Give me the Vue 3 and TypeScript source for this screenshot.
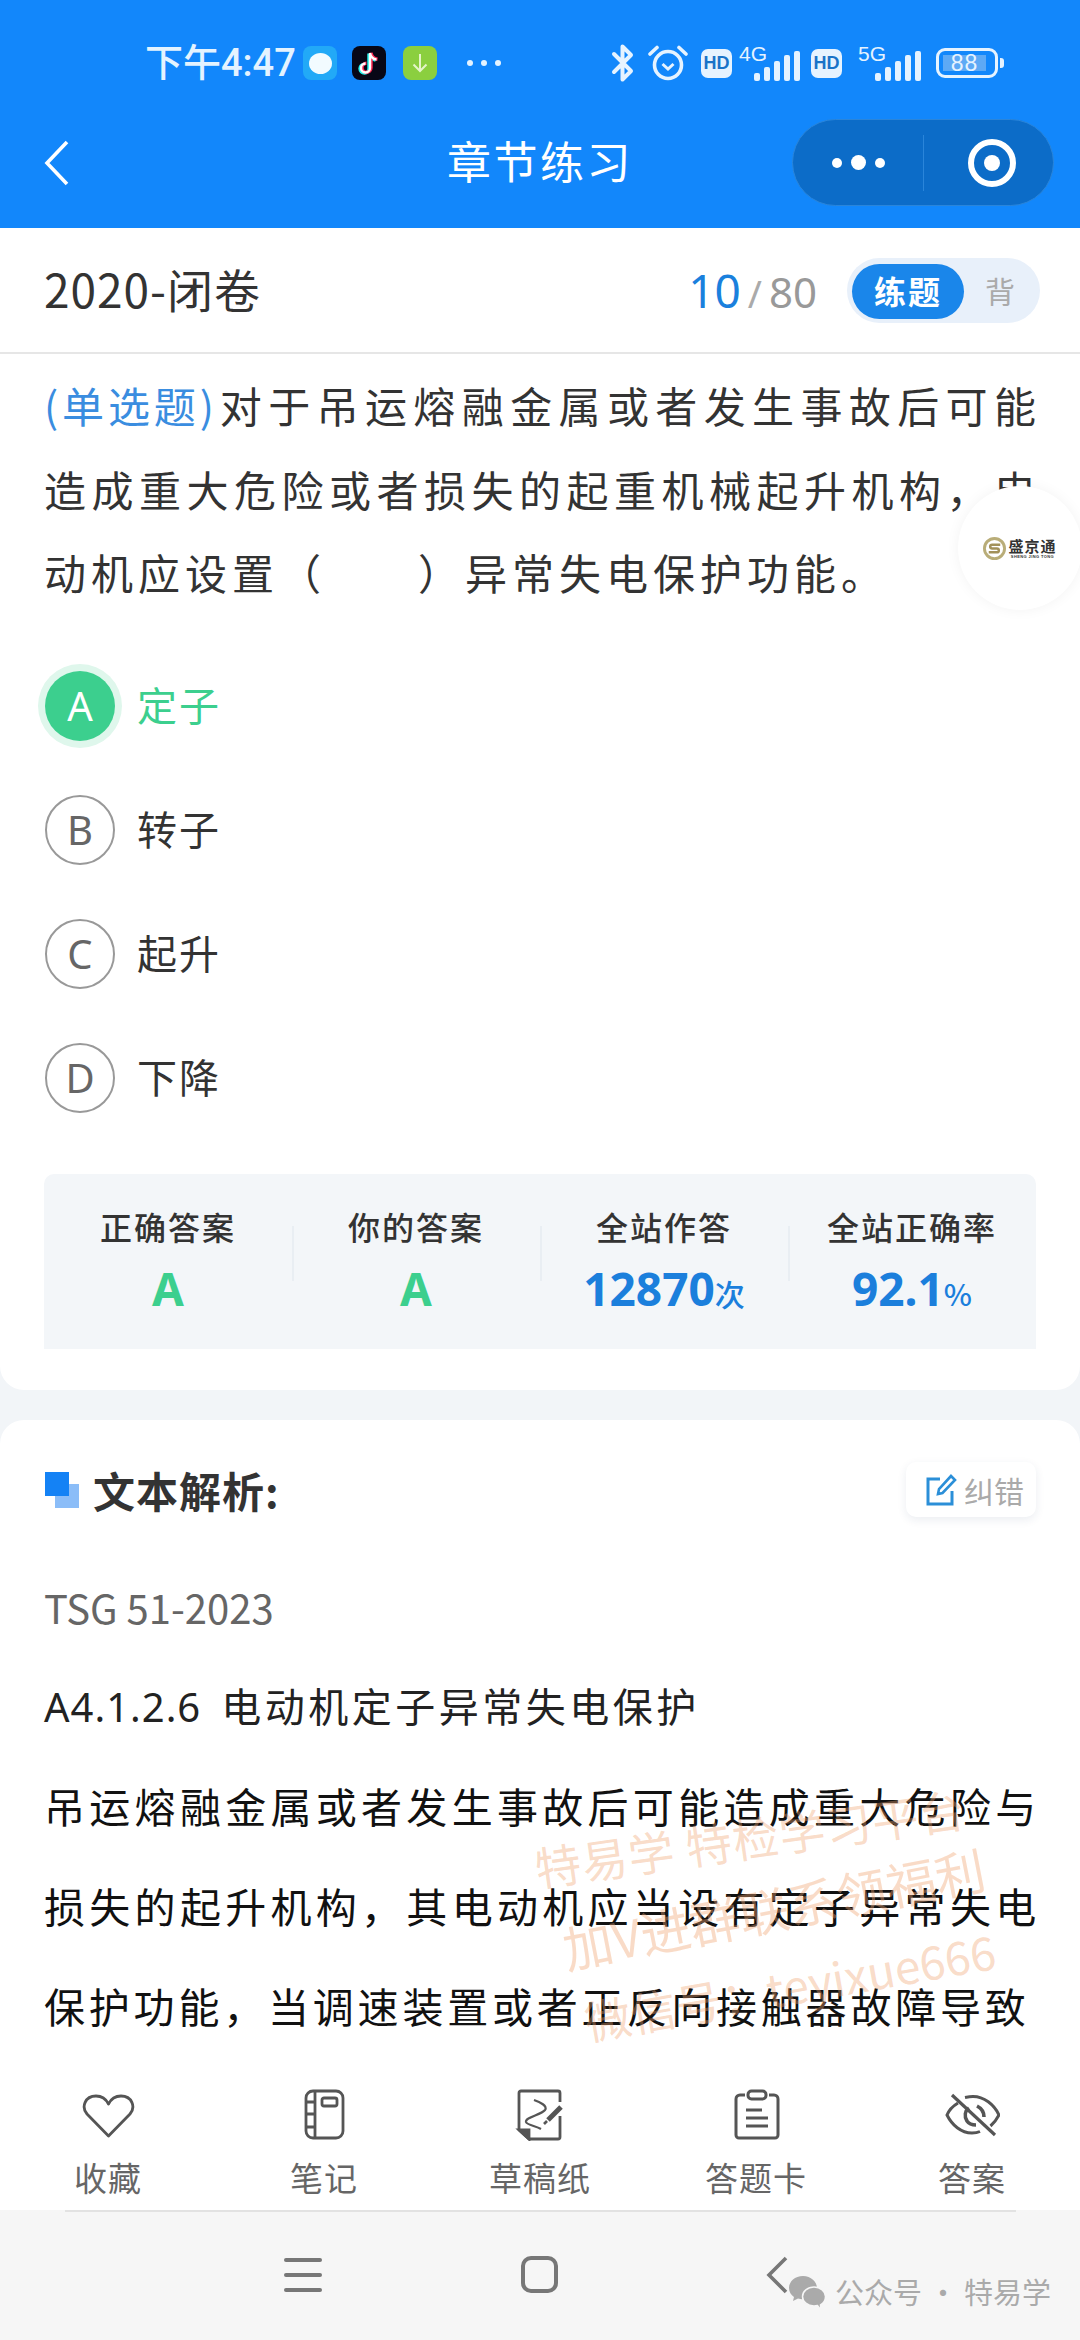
<script setup lang="ts">
interface Option { key: string; text: string; active?: boolean }
interface Stat { label: string; value: string; unit?: string; tone: 'green' | 'blue' }
interface Tab { label: string; icon: string }

const options: Option[] = [
  { key: 'A', text: '定子', active: true },
  { key: 'B', text: '转子' },
  { key: 'C', text: '起升' },
  { key: 'D', text: '下降' }
]

const stats: Stat[] = [
  { label: '正确答案', value: 'A', tone: 'green' },
  { label: '你的答案', value: 'A', tone: 'green' },
  { label: '全站作答', value: '12870', unit: '次', tone: 'blue' },
  { label: '全站正确率', value: '92.1', unit: '%', tone: 'blue' }
]

const tabs: Tab[] = [
  { label: '收藏', icon: 'heart' },
  { label: '笔记', icon: 'note' },
  { label: '草稿纸', icon: 'draft' },
  { label: '答题卡', icon: 'card' },
  { label: '答案', icon: 'eye' }
]

const signalBars = [8, 14, 20, 26, 30]
</script>

<template>
  <div class="page">
    <header class="top">
      <div class="status">
        <span class="time">下午4:47</span>
        <span class="app app-msg"><i></i></span>
        <span class="app app-tt">
          <svg viewBox="0 0 34 34" width="34" height="34">
            <path d="M18 7v15a4.5 4.5 0 1 1-4.5-4.5M18 7c.6 4 3 6 6.5 6.5" fill="none" stroke="#25f4ee" stroke-width="3.4" transform="translate(-1 .6)" />
            <path d="M18 7v15a4.5 4.5 0 1 1-4.5-4.5M18 7c.6 4 3 6 6.5 6.5" fill="none" stroke="#fe2c55" stroke-width="3.4" transform="translate(1 -.2)" />
            <path d="M18 7v15a4.5 4.5 0 1 1-4.5-4.5M18 7c.6 4 3 6 6.5 6.5" fill="none" stroke="#fff" stroke-width="2.4" />
          </svg>
        </span>
        <span class="app app-dl">
          <svg viewBox="0 0 34 34" width="34" height="34">
            <path d="M17 8v17M10.5 18.5 17 25l6.5-6.5" fill="none" stroke="#e4f5c8" stroke-width="2" />
          </svg>
        </span>
        <span class="more"><i></i><i></i><i></i></span>

        <span class="status-right">
          <svg class="bt" viewBox="0 0 26 40" width="26" height="40">
            <path d="M4 11 21 28l-8.500 8.500V3.500L21 12 4 29" fill="none" stroke="#e6f3ff" stroke-width="4" stroke-linejoin="round" stroke-linecap="round" />
          </svg>
          <svg class="alarm" viewBox="0 0 40 36" width="40" height="36">
            <circle cx="20" cy="20" r="13.500" fill="none" stroke="#e6f3ff" stroke-width="3.600" />
            <path d="M14.500 19 20 24l5.500-5" fill="none" stroke="#e6f3ff" stroke-width="3" />
            <path d="M2 9 9 2.500M38 9l-7-6.500" fill="none" stroke="#e6f3ff" stroke-width="3.600" stroke-linecap="round" />
          </svg>
          <span class="hd">HD</span>
          <span class="net">
            <em>4G</em>
            <span class="bars"><i v-for="h in signalBars" :key="h" :style="{ height: h + 'px' }"></i></span>
          </span>
          <span class="hd hd2">HD</span>
          <span class="net net5">
            <em>5G</em>
            <span class="bars"><i v-for="h in signalBars" :key="h" :style="{ height: h + 'px' }"></i></span>
          </span>
          <span class="battery"><span class="level">88</span></span>
          <span class="nub"></span>
        </span>
      </div>

      <div class="nav">
        <svg class="back" viewBox="0 0 26 46" width="26" height="46">
          <path d="M23 2 3 23l20 21" fill="none" stroke="#fff" stroke-width="3.600" />
        </svg>
        <h1>章节练习</h1>
        <div class="capsule">
          <span class="cap-dots"><i></i><i class="big"></i><i></i></span>
          <span class="cap-line"></span>
          <span class="cap-target"><i></i></span>
        </div>
      </div>
    </header>

    <div class="sub">
      <span class="paper">2020-闭卷</span>
      <span class="count"><b>10</b><s>/</s><em>80</em></span>
      <div class="toggle">
        <span class="on">练题</span>
        <span class="off">背</span>
      </div>
    </div>

    <section class="card first">
      <p class="question">
        <span class="kind">(单选题)</span>对于吊运熔融金属或者发生事故后可能造成重大危险或者损失的起重机械起升机构，电动机应设置（<span class="blank"></span>）异常失电保护功能。
      </p>

      <ul class="options">
        <li v-for="o in options" :key="o.key" :class="{ active: o.active }">
          <span class="mark">{{ o.key }}</span>
          <span class="opt-text">{{ o.text }}</span>
        </li>
      </ul>

      <div class="stats">
        <div v-for="s in stats" :key="s.label" class="stat">
          <span class="label">{{ s.label }}</span>
          <span class="value" :class="s.tone">{{ s.value }}<small v-if="s.unit">{{ s.unit }}</small></span>
        </div>
      </div>

      <div class="float-logo">
        <svg viewBox="0 0 24 24" width="23" height="23">
          <circle cx="12" cy="12" r="10.500" fill="none" stroke="#b9ad78" stroke-width="3" />
          <path d="M18 8H9.500a2 2 0 0 0 0 4h5a2 2 0 0 1 0 4H6" fill="none" stroke="#a2915a" stroke-width="2.600" />
        </svg>
        <span class="logo-text">
          <b>盛京通</b>
          <small>SHENG JING TONG</small>
        </span>
      </div>
    </section>

    <section class="card second">
      <div class="head">
        <span class="squares"><i></i><i></i></span>
        <h2>文本解析:</h2>
        <span class="report">
          <svg viewBox="0 0 32 32" width="32" height="32">
            <path d="M15 5H3v25h24V17" fill="none" stroke="#2b8fd8" stroke-width="3" />
            <path d="m13 20 1-5L26 2l4 4-12.500 13z" fill="none" stroke="#2b8fd8" stroke-width="2.600" />
          </svg>
          <span>纠错</span>
        </span>
      </div>
      <p class="src">TSG 51-2023</p>
      <p class="clause"><span class="code">A4.1.2.6</span>电动机定子异常失电保护</p>
      <p class="body-text">吊运熔融金属或者发生事故后可能造成重大危险与损失的起升机构，其电动机应当设有定子异常失电保护功能，当调速装置或者正反向接触器故障导致</p>

      <div class="stamp">
        <span class="s1">特易学 特检学习平台</span>
        <span class="s2">加V进群联系领福利</span>
        <span class="s3">微信号：teyixue666</span>
      </div>
    </section>

    <footer class="tabs">
      <div v-for="t in tabs" :key="t.label" class="tab">
        <svg viewBox="0 0 56 52" width="56" height="52" fill="none" stroke="#555" stroke-width="2.800">
          <template v-if="t.icon === 'heart'">
            <path d="M28.500 47 7 25C1 18 5 7 16 7c5 0 10 3 12.500 8C31 10 36 7 41 7c11 0 15 11 9 18z" stroke-linejoin="round" />
          </template>
          <template v-else-if="t.icon === 'note'">
            <rect x="10" y="2" width="37" height="47" rx="7" />
            <path d="M19 2v47M10 13h9M10 25h9M10 38h9" />
            <rect x="26" y="9" width="15" height="8" rx="2" />
          </template>
          <template v-else-if="t.icon === 'draft'">
            <path d="M48 13V4a2 2 0 0 0-2-2H9a2 2 0 0 0-2 2v37l10 9h29a2 2 0 0 0 2-2V27" />
            <path d="M7 41h10v9z" fill="#555" />
            <path d="M22 11c6 2 14 6 11 10-4 5-20 7-19 12 1 3 10 4 15 7" stroke-width="2.200" />
            <path d="m36 31 13-13" stroke-width="5" />
            <path d="m32 35 3-3" stroke-width="2.600" />
          </template>
          <template v-else-if="t.icon === 'card'">
            <path d="M17 6h-5a4 4 0 0 0-4 4v36a3 3 0 0 0 3 3h36a3 3 0 0 0 3-3V10a4 4 0 0 0-4-4h-5" stroke-width="3" />
            <rect x="20" y="2" width="18" height="8" rx="3.500" stroke-width="3" />
            <path d="M18 21h16M18 29h22M18 37h22" stroke-width="3.200" />
          </template>
          <template v-else>
            <path d="M14 14C9 17 5 21 3 26c5 10 14 18 25 18 3 0 6-.6 8-1.500M21 8.500C23.500 8 26 7.500 29 7.500c11 0 21 8 26 18.500-2 4-5 8-8.500 11" stroke-width="3" />
            <path d="M25 19c-4 3-5 8-2 13 2 3 5 4 9 4M33 17c4 2 7 6 7 11" stroke-width="3.600" />
            <path d="M8 6l43 40" stroke-width="3.200" />
          </template>
        </svg>
        <span>{{ t.label }}</span>
      </div>
    </footer>

    <nav class="sysbar">
      <span class="burger"><i></i><i></i><i></i></span>
      <span class="home"></span>
      <svg class="sys-back" viewBox="0 0 22 38" width="22" height="38">
        <path d="M20 2 3 19l17 17" fill="none" stroke="#777" stroke-width="3.600" />
      </svg>
      <div class="mp">
        <svg viewBox="0 0 40 36" width="40" height="36">
          <path d="M16 1C8 1 2 6.500 2 13c0 4 2 7 5 9l-1 4 5-2.500c1.500.5 3 .7 5 .7 8 0 14-5.200 14-11.200S24 1 16 1z" fill="#aaa" />
          <path d="M27 12c-6.500 0-11.500 4.300-11.500 9.500S20.500 31 27 31c1.200 0 2.500-.2 3.500-.5L34 35l-.5-5c3-1.800 5-5 5-8.500C38.500 16.300 33.500 12 27 12z" fill="#aaa" stroke="#f6f6f6" stroke-width="1.500" />
        </svg>
        <span>公众号 · 特易学</span>
      </div>
    </nav>
  </div>
</template>

<style scoped>
.page {
  position: relative;
  width: 1080px;
  height: 2340px;
  overflow: hidden;
  display: flex;
  flex-direction: column;
  background: #f2f5f8;
  font-family: "Noto Sans CJK SC", "Noto Sans", sans-serif;
  color: #333;
}

.page i, .page em, .page s { font-style: normal; text-decoration: none; }

/* header */
.top {
  height: 228px;
  flex: none;
  background: #1287fb;
  color: #fff;
}

.status {
  height: 126px;
  padding: 0 0 0 145px;
  display: flex;
  align-items: center;
  box-sizing: border-box;
}

.time {
  width: 158px;
  font: 500 38px/1 Roboto, "Noto Sans CJK SC", sans-serif;
  color: #e4f3ff;
  white-space: nowrap;
}

.app {
  width: 34px;
  height: 34px;
  flex: none;
  border-radius: 8px;
  display: flex;
  align-items: center;
  justify-content: center;
}

.app-msg { background: #22a9f7; }
.app-msg i { width: 23px; height: 21px; border-radius: 50%; background: #f2fbff; }
.app-tt { background: #070716; margin-left: 15px; }
.app-dl { background: #8bcf3f; margin-left: 17px; }

.more { display: flex; gap: 8px; margin-left: 30px; }
.more i { width: 6px; height: 6px; border-radius: 50%; background: #e4f3ff; }

.status-right {
  display: flex;
  align-items: center;
  position: relative;
  margin-left: 109px;
}

.bt { flex: none; }
.alarm { margin-left: 12px; flex: none; }

.hd {
  width: 31px;
  height: 29px;
  margin-left: 13px;
  border-radius: 7px;
  background: #e6f3ff;
  color: #1a73c8;
  font: 700 18px/29px "Liberation Sans", sans-serif;
  text-align: center;
  flex: none;
}

.hd2 { margin-left: 11px; }

.net {
  width: 62px;
  height: 36px;
  margin-left: 6px;
  display: flex;
  justify-content: flex-end;
  align-items: flex-end;
  position: relative;
  flex: none;
}

.net em {
  position: absolute;
  left: 1px;
  top: -2px;
  font: 400 21px/1 "Liberation Sans", sans-serif;
  color: #e6f3ff;
}

.net5 { width: 63px; margin-left: 16px; }
.net5 em { left: 0; }

.bars { display: flex; align-items: flex-end; gap: 4px; }
.bars i { width: 6px; background: #e6f3ff; border-radius: 2px; }

.battery {
  width: 62px;
  height: 30px;
  margin-left: 15px;
  padding: 4px;
  border: 3px solid #e6f3ff;
  border-radius: 9px;
  box-sizing: border-box;
  flex: none;
  display: flex;
}

.level {
  width: 43px;
  background: #5da9f5;
  color: #e6f3ff;
  font: 400 23px/16px "Liberation Sans", sans-serif;
  text-align: center;
  letter-spacing: 1px;
}

.nub { width: 4px; height: 10px; margin-left: 2px; background: #e6f3ff; border-radius: 0 3px 3px 0; flex: none; }

.nav {
  height: 102px;
  position: relative;
  display: flex;
  align-items: flex-start;
  justify-content: center;
}

.back { position: absolute; left: 44px; top: 14px; }

.nav h1 {
  margin: 3px 0 0;
  font-size: 44px;
  font-weight: 400;
  line-height: 62px;
  letter-spacing: 2.500px;
}

.capsule {
  position: absolute;
  left: 792px;
  top: -7px;
  width: 262px;
  height: 87px;
  box-sizing: border-box;
  border-radius: 44px;
  background: #0c6cc8;
  border: 1px solid #2a85da;
  display: flex;
  align-items: center;
}

.cap-dots { width: 130px; display: flex; justify-content: center; align-items: center; gap: 9px; }
.cap-dots i { width: 10px; height: 10px; border-radius: 50%; background: #fff; }
.cap-dots i.big { width: 15px; height: 15px; }
.cap-line { width: 1px; height: 56px; background: #2a85da; }
.cap-target {
  width: 48px;
  height: 48px;
  margin-left: 44px;
  box-sizing: border-box;
  border: 6px solid #fff;
  border-radius: 50%;
  display: flex;
  align-items: center;
  justify-content: center;
}
.cap-target i { width: 16px; height: 16px; border-radius: 50%; background: #fff; }

/* sub header */
.sub {
  height: 126px;
  flex: none;
  box-sizing: border-box;
  padding: 0 40px 0 44px;
  display: flex;
  align-items: center;
  background: #fff;
  border-bottom: 2px solid #e6e6e6;
}

.paper { font-size: 46px; color: #333; letter-spacing: 1px; margin-top: -5px; }

.count {
  margin-left: auto;
  display: flex;
  align-items: baseline;
  font-family: "Noto Sans", sans-serif;
}
.count b { font-size: 46px; font-weight: 400; color: #1a80dd; }
.count s { font-size: 38px; color: #aaa; margin: 0 7px; }
.count em { font-size: 42px; color: #999; }

.toggle {
  width: 193px;
  height: 65px;
  margin-left: 30px;
  border-radius: 33px;
  background: #e8f0fa;
  box-sizing: border-box;
  padding: 6px 0 0 5px;
  display: flex;
}
.toggle .on {
  width: 112px;
  height: 55px;
  border-radius: 28px;
  background: #1a86ea;
  color: #fff;
  font-size: 32px;
  font-weight: 700;
  line-height: 53px;
  letter-spacing: 2px;
  text-align: center;
}
.toggle .off { margin-left: 21px; font-size: 30px; line-height: 52px; color: #aaa; }

/* cards */
.card {
  position: relative;
  background: #fff;
  flex: none;
}

.first {
  height: 1036px;
  box-sizing: border-box;
  padding: 9px 44px 0;
  border-radius: 0 0 24px 24px;
}

.question {
  margin: 0 -5px 0 0;
  font-size: 42px;
  line-height: 83.500px;
  letter-spacing: 5px;
  color: #333;
  text-align: justify;
}

.kind { color: #3a8de0; letter-spacing: 2.500px; margin-right: 2px; }
.blank { display: inline-block; width: 92px; }

.options {
  list-style: none;
  margin: 30px 0 0;
  padding: 0;
}

.options li {
  height: 124px;
  display: flex;
  align-items: center;
  gap: 22px;
  font-size: 40px;
  letter-spacing: 2px;
  color: #333;
}

.opt-text { margin-top: -3px; }

.mark {
  width: 70px;
  height: 70px;
  margin-left: 1px;
  box-sizing: border-box;
  border: 2px solid #999;
  border-radius: 50%;
  color: #666;
  display: flex;
  align-items: center;
  justify-content: center;
  font: 400 40px/1 "Noto Sans", sans-serif;
  letter-spacing: 0;
}

.active { color: #3ccf8e !important; }
.active .mark {
  border: none;
  background: #3ccf8e;
  color: #fff;
  box-shadow: 0 0 0 7px #dff7ec;
}

.stats {
  margin-top: 34px;
  height: 175px;
  display: grid;
  grid-template-columns: repeat(4, 1fr);
  background: #f3f6f9;
  border-radius: 10px 10px 0 0;
}

.stat {
  display: flex;
  flex-direction: column;
  align-items: center;
  padding-top: 30px;
  box-sizing: border-box;
  position: relative;
}

.stat + .stat::before {
  content: "";
  position: absolute;
  left: 0;
  top: 52px;
  height: 55px;
  width: 2px;
  background: #e9eef3;
}

.label { font-size: 32px; font-weight: 500; line-height: 44px; color: #333; letter-spacing: 2px; white-space: nowrap; }
.value { font: 700 46px/60px "Noto Sans", sans-serif; margin-top: 10px; }
.value small { font-size: 30px; font-weight: 500; font-family: "Noto Sans CJK SC", sans-serif; }
.green { color: #3ccf8e; }
.blue { color: #1b7fdc; }

.float-logo {
  position: absolute;
  left: 958px;
  top: 132px;
  width: 124px;
  height: 124px;
  border-radius: 50%;
  background: #fff;
  box-shadow: 0 0 14px rgba(0, 0, 0, .05);
  display: flex;
  align-items: center;
  justify-content: center;
  gap: 2px;
}

.logo-text { display: flex; flex-direction: column; align-items: center; line-height: 1; color: #333; }
.logo-text b { font: 700 15px/17px "Noto Sans CJK SC", sans-serif; letter-spacing: 1px; }
.logo-text small { font: 700 4px/5px "Liberation Sans", sans-serif; white-space: nowrap; letter-spacing: .4px; }

.second {
  height: 650px;
  margin-top: 30px;
  padding: 42px 44px 0;
  box-sizing: border-box;
  border-radius: 24px 24px 0 0;
  overflow: hidden;
}

.head { display: flex; align-items: center; height: 55px; }

.squares { width: 35px; height: 36px; position: relative; margin-left: 1px; flex: none; }
.squares i { position: absolute; width: 24px; height: 24px; }
.squares i:first-child { left: 10px; top: 12px; background: #8bbdf8; }
.squares i:last-child { left: 0; top: 0; background: #1482f5; }

.head h2 { margin: 0 0 0 13px; font-size: 42px; font-weight: 700; letter-spacing: 1px; color: #333; }

.report {
  margin-left: auto;
  width: 130px;
  height: 55px;
  box-sizing: border-box;
  padding-left: 19px;
  border-radius: 10px;
  background: #fff;
  box-shadow: 0 3px 10px rgba(30, 60, 100, .09);
  display: flex;
  align-items: center;
  gap: 7px;
  font-size: 30px;
  color: #aaa;
}

.src { margin: 60px 0 0; font-size: 40px; line-height: 60px; color: #666; }
.clause { margin: 38px 0 0; font-size: 40px; line-height: 60px; color: #222; letter-spacing: 3.500px; }
.code { letter-spacing: 1px; margin-right: 20px; font-family: "Noto Sans", sans-serif; }
.body-text { margin: 18px -4px 0 0; font-size: 41px; line-height: 100px; letter-spacing: 3.800px; color: #111; text-align: justify; }

.stamp {
  position: absolute;
  left: 0;
  top: 0;
  width: 0;
  height: 0;
  color: rgba(240, 165, 115, .4);
  font-size: 46px;
  white-space: nowrap;
}
.stamp span { position: absolute; transform-origin: 0 50%; line-height: 1; }
.s1 { left: 535px; top: 424px; letter-spacing: 1px; transform: rotate(-8deg); }
.s2 { left: 563px; top: 503px; font-size: 50px; transform: rotate(-11deg); }
.s3 { left: 585px; top: 578px; transform: rotate(-10deg); }

/* bottom */
.tabs {
  position: absolute;
  left: 0;
  top: 2068px;
  width: 1080px;
  height: 142px;
  background: #fff;
  display: grid;
  grid-template-columns: repeat(5, 216px);
}

.tab {
  display: flex;
  flex-direction: column;
  align-items: center;
  padding-top: 21px;
  box-sizing: border-box;
}
.tab span { margin-top: 12px; font-size: 33px; line-height: 48px; color: #666; letter-spacing: 1px; }

.sysbar {
  position: absolute;
  left: 0;
  top: 2210px;
  width: 1080px;
  height: 130px;
  background: #f6f6f6;
  display: block;
}

.sysbar::before {
  content: "";
  position: absolute;
  left: 65px;
  right: 64px;
  top: 0;
  height: 2px;
  background: #e2e2e2;
}

.burger { position: absolute; left: 284px; top: 48px; width: 38px; display: flex; flex-direction: column; gap: 11px; }
.burger i { height: 4px; background: #777; border-radius: 2px; }

.home {
  position: absolute;
  left: 521px;
  top: 46px;
  width: 37px;
  height: 37px;
  box-sizing: border-box;
  border: 4px solid #777;
  border-radius: 10px;
}

.sys-back { position: absolute; left: 766px; top: 46px; }

.mp {
  position: absolute;
  left: 787px;
  top: 64px;
  display: flex;
  align-items: center;
  gap: 8px;
  font-size: 29px;
  color: #aaa;
  white-space: nowrap;
}
.mp span { margin-top: -4px; }
</style>

<style>
html, body { margin: 0; padding: 0; background: #fff; }
</style>
